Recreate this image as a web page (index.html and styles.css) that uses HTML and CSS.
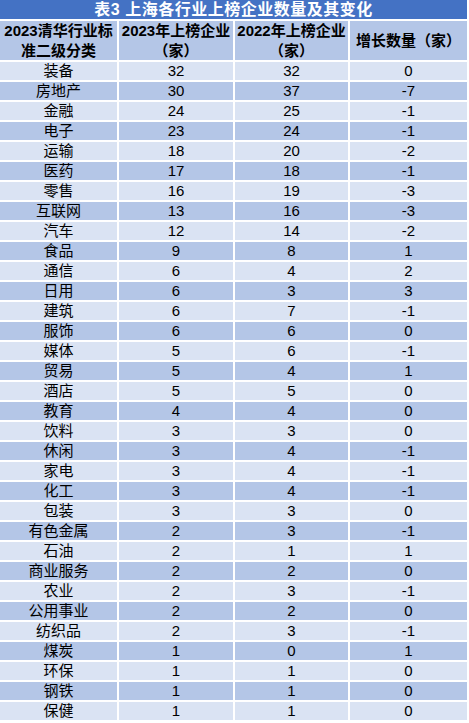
FILE: index.html
```html
<!DOCTYPE html>
<html lang="zh">
<head>
<meta charset="utf-8">
<title>表3 上海各行业上榜企业数量及其变化</title>
<link rel="stylesheet" href="styles.css">
</head>
<body>
<div class="table">
  <div class="title">表3 上海各行业上榜企业数量及其变化</div>
  <div class="row head">
    <div class="cell">2023清华行业标<br>准二级分类</div>
    <div class="cell">2023年上榜企业<br>（家）</div>
    <div class="cell">2022年上榜企业<br>（家）</div>
    <div class="cell">增长数量（家）</div>
  </div>
  <div class="row light"><div class="cell">装备</div><div class="cell">32</div><div class="cell">32</div><div class="cell">0</div></div>
  <div class="row dark"><div class="cell">房地产</div><div class="cell">30</div><div class="cell">37</div><div class="cell">-7</div></div>
  <div class="row light"><div class="cell">金融</div><div class="cell">24</div><div class="cell">25</div><div class="cell">-1</div></div>
  <div class="row dark"><div class="cell">电子</div><div class="cell">23</div><div class="cell">24</div><div class="cell">-1</div></div>
  <div class="row light"><div class="cell">运输</div><div class="cell">18</div><div class="cell">20</div><div class="cell">-2</div></div>
  <div class="row dark"><div class="cell">医药</div><div class="cell">17</div><div class="cell">18</div><div class="cell">-1</div></div>
  <div class="row light"><div class="cell">零售</div><div class="cell">16</div><div class="cell">19</div><div class="cell">-3</div></div>
  <div class="row dark"><div class="cell">互联网</div><div class="cell">13</div><div class="cell">16</div><div class="cell">-3</div></div>
  <div class="row light"><div class="cell">汽车</div><div class="cell">12</div><div class="cell">14</div><div class="cell">-2</div></div>
  <div class="row dark"><div class="cell">食品</div><div class="cell">9</div><div class="cell">8</div><div class="cell">1</div></div>
  <div class="row light"><div class="cell">通信</div><div class="cell">6</div><div class="cell">4</div><div class="cell">2</div></div>
  <div class="row dark"><div class="cell">日用</div><div class="cell">6</div><div class="cell">3</div><div class="cell">3</div></div>
  <div class="row light"><div class="cell">建筑</div><div class="cell">6</div><div class="cell">7</div><div class="cell">-1</div></div>
  <div class="row dark"><div class="cell">服饰</div><div class="cell">6</div><div class="cell">6</div><div class="cell">0</div></div>
  <div class="row light"><div class="cell">媒体</div><div class="cell">5</div><div class="cell">6</div><div class="cell">-1</div></div>
  <div class="row dark"><div class="cell">贸易</div><div class="cell">5</div><div class="cell">4</div><div class="cell">1</div></div>
  <div class="row light"><div class="cell">酒店</div><div class="cell">5</div><div class="cell">5</div><div class="cell">0</div></div>
  <div class="row dark"><div class="cell">教育</div><div class="cell">4</div><div class="cell">4</div><div class="cell">0</div></div>
  <div class="row light"><div class="cell">饮料</div><div class="cell">3</div><div class="cell">3</div><div class="cell">0</div></div>
  <div class="row dark"><div class="cell">休闲</div><div class="cell">3</div><div class="cell">4</div><div class="cell">-1</div></div>
  <div class="row light"><div class="cell">家电</div><div class="cell">3</div><div class="cell">4</div><div class="cell">-1</div></div>
  <div class="row dark"><div class="cell">化工</div><div class="cell">3</div><div class="cell">4</div><div class="cell">-1</div></div>
  <div class="row light"><div class="cell">包装</div><div class="cell">3</div><div class="cell">3</div><div class="cell">0</div></div>
  <div class="row dark"><div class="cell">有色金属</div><div class="cell">2</div><div class="cell">3</div><div class="cell">-1</div></div>
  <div class="row light"><div class="cell">石油</div><div class="cell">2</div><div class="cell">1</div><div class="cell">1</div></div>
  <div class="row dark"><div class="cell">商业服务</div><div class="cell">2</div><div class="cell">2</div><div class="cell">0</div></div>
  <div class="row light"><div class="cell">农业</div><div class="cell">2</div><div class="cell">3</div><div class="cell">-1</div></div>
  <div class="row dark"><div class="cell">公用事业</div><div class="cell">2</div><div class="cell">2</div><div class="cell">0</div></div>
  <div class="row light"><div class="cell">纺织品</div><div class="cell">2</div><div class="cell">3</div><div class="cell">-1</div></div>
  <div class="row dark"><div class="cell">煤炭</div><div class="cell">1</div><div class="cell">0</div><div class="cell">1</div></div>
  <div class="row light"><div class="cell">环保</div><div class="cell">1</div><div class="cell">1</div><div class="cell">0</div></div>
  <div class="row dark"><div class="cell">钢铁</div><div class="cell">1</div><div class="cell">1</div><div class="cell">0</div></div>
  <div class="row light"><div class="cell">保健</div><div class="cell">1</div><div class="cell">1</div><div class="cell">0</div></div>
</div>
</body>
</html>
```

FILE: styles.css
```css
html, body {
  margin: 0;
  padding: 0;
  background: #ffffff;
}

body {
  font-family: "Liberation Sans", "Noto Sans CJK SC", sans-serif;
  color: #000000;
  font-size: 15px;
}

.table {
  width: 467px;
  display: flex;
  flex-direction: column;
  gap: 2px;
}

.title {
  height: 19px;
  line-height: 19px;
  background: #4472c4;
  color: #ffffff;
  font-weight: bold;
  font-size: 16px;
  letter-spacing: 0.5px;
  text-align: center;
  white-space: nowrap;
}

.row {
  display: grid;
  grid-template-columns: 117px 114px 113px 117px;
  column-gap: 2px;
}

.cell {
  height: 18px;
  line-height: 18px;
  text-align: center;
  white-space: nowrap;
}

.light .cell {
  background: #dae3f3;
}

.dark .cell {
  background: #b4c6e7;
}

.head .cell {
  height: 39px;
  line-height: 20px;
  background: #b4c6e7;
  font-weight: bold;
  display: flex;
  align-items: center;
  justify-content: center;
}
```
